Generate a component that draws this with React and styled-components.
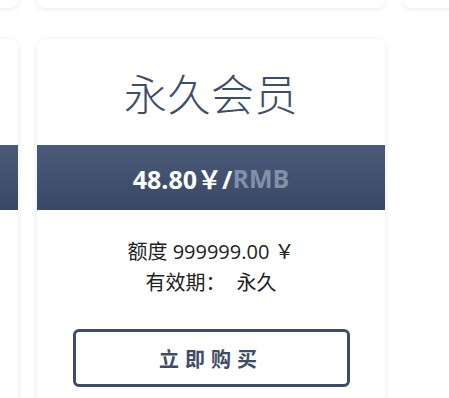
import React from "react";
import styled, { createGlobalStyle } from "styled-components";

const Global = createGlobalStyle`
  html, body { margin: 0; padding: 0; background: #ffffff; overflow: hidden; }
  body { font-family: "Open Sans", "Noto Sans CJK SC", sans-serif; }
`;

const Viewport = styled.div`
  width: 449px;
  height: 398px;
  overflow: hidden;
  background: #ffffff;
`;

const Grid = styled.div`
  display: grid;
  grid-template-columns: repeat(3, 348px);
  column-gap: 19px;
  row-gap: 31px;
  margin-left: -330px;
  margin-top: -372px;
`;

const Card = styled.div`
  height: 380px;
  background: #ffffff;
  border-radius: 8px;
  box-shadow: 0 1px 6px rgba(0, 0, 0, 0.09);
  overflow: hidden;
  display: flex;
  flex-direction: column;
`;

const Title = styled.div`
  height: 106px;
  display: flex;
  align-items: center;
  justify-content: center;
  font-family: "Noto Sans CJK SC", sans-serif;
  font-size: 43px;
  font-weight: 300;
  color: #3e4d68;
  letter-spacing: 0.5px;
`;

const PriceBand = styled.div`
  height: 65px;
  display: flex;
  align-items: center;
  justify-content: center;
  background: linear-gradient(180deg, #4b5a78 0%, #394865 100%);
  color: #ffffff;
  font-family: "Open Sans", "Noto Sans CJK SC", sans-serif;
  font-weight: 700;
  font-size: 25px;
`;

const Unit = styled.span`
  color: #8390a9;
`;

const Details = styled.div`
  padding-top: 26px;
  display: flex;
  flex-direction: column;
  align-items: center;
  font-family: "Open Sans", "Noto Sans CJK SC", sans-serif;
  font-size: 20px;
  line-height: 31px;
  color: #222222;
`;

const Gap = styled.span`
  display: inline-block;
  width: 11px;
`;

const BuyButton = styled.button`
  margin: 31px auto 0;
  width: 277px;
  height: 58px;
  box-sizing: border-box;
  border: 3px solid #3e4c66;
  border-radius: 6px;
  background: #ffffff;
  color: #3e4c66;
  font-family: "Noto Sans CJK SC", sans-serif;
  font-weight: 700;
  font-size: 20px;
  letter-spacing: 6px;
  padding: 0;
  cursor: pointer;
`;

function Plan({ title, price, quota, period }) {
  return (
    <Card>
      <Title>{title}</Title>
      <PriceBand>
        {price}￥/<Unit>RMB</Unit>
      </PriceBand>
      <Details>
        <div>额度 {quota} ￥</div>
        <div>
          有效期：<Gap />{period}
        </div>
      </Details>
      <BuyButton>立即购买</BuyButton>
    </Card>
  );
}

const plans = [
  { title: "月度会员", price: "9.90", quota: "100.00", period: "30天" },
  { title: "季度会员", price: "19.90", quota: "500.00", period: "90天" },
  { title: "年度会员", price: "29.90", quota: "2000.00", period: "365天" },
  { title: "超级会员", price: "38.80", quota: "9999.00", period: "365天" },
  { title: "永久会员", price: "48.80", quota: "999999.00", period: "永久" },
];

export default function App() {
  return (
    <Viewport>
      <Global />
      <Grid>
        {plans.map((p) => (
          <Plan key={p.title} {...p} />
        ))}
      </Grid>
    </Viewport>
  );
}
